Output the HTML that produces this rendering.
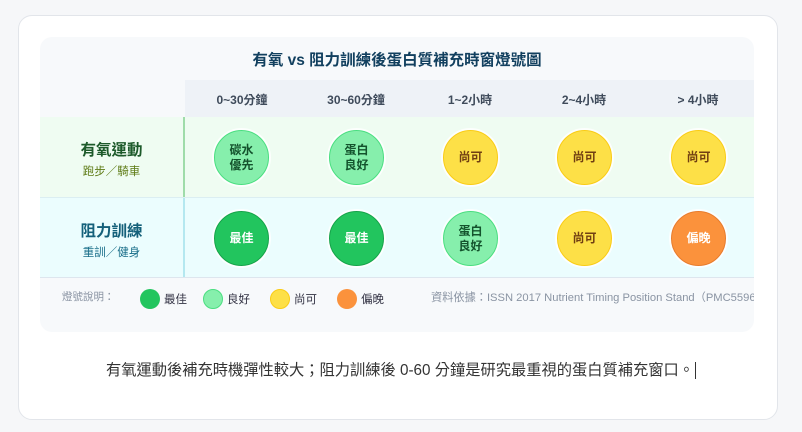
<!DOCTYPE html>
<html><head><meta charset="utf-8"><style>
*{margin:0;padding:0;box-sizing:border-box}
body{width:802px;height:432px;background:#f6f7f9;font-family:"Liberation Sans","Noto Sans CJK TC",sans-serif;position:relative;overflow:hidden}
.card{position:absolute;left:18px;top:15px;width:760px;height:405px;background:#fff;border:1px solid #e2e5ea;border-radius:14px}
.panel{position:absolute;left:40px;top:37px;width:714px;height:295px;background:#f7f9fb;border-radius:12px;overflow:hidden}
.title{position:absolute;left:0;right:0;top:11px;text-align:center;font-size:15.5px;font-weight:bold;color:#12405f}
.hdr{position:absolute;left:145px;top:43px;width:569px;height:37px;background:#eef2f7}
.hc{position:absolute;top:54px;width:114px;text-align:center;font-size:12px;font-weight:bold;color:#3f4b5b}
.row{position:absolute;left:0;width:714px}
.r1{top:80px;height:80px;background:#effcf2}
.r2{top:160px;height:81px;background:#ebfdfe;border-top:1px solid #dbeef2;border-bottom:1px solid #dde6ee}
.bar{position:absolute;left:143px;top:0;bottom:0;width:2px}
.lab{position:absolute;left:0;width:143px;text-align:center}
.lab b{display:block;font-size:15.5px}
.lab span{display:block;font-size:11.5px;margin-top:3px}
.c{position:absolute;width:55px;height:55px;border-radius:50%;display:flex;align-items:center;justify-content:center;text-align:center;font-size:12px;font-weight:bold;line-height:15px;box-shadow:0 0 0 2px rgba(255,255,255,.8)}
.best{background:#22c55e;border:1.5px solid #16a34a;color:#fff}
.good{background:#86efac;border:1.5px solid #4ade80;color:#14532d}
.ok{background:#fde047;border:1.5px solid #facc15;color:#713f12}
.late{background:#fb923c;border:1.5px solid #e87c2c;color:#fff}
.leg{position:absolute;top:252px;font-size:11.5px;color:#334;display:flex;align-items:center}
.dot{width:20px;height:20px;border-radius:50%;margin-right:4px}
.cap{position:absolute;left:0;width:802px;top:358px;text-align:center;font-size:15.25px;color:#333}
</style></head><body>
<div class="card"></div>
<div class="panel">
<div class="title">有氧 vs 阻力訓練後蛋白質補充時窗燈號圖</div>
<div class="hdr"></div>
<div class="hc" style="left:145px">0~30分鐘</div>
<div class="hc" style="left:259px">30~60分鐘</div>
<div class="hc" style="left:373px">1~2小時</div>
<div class="hc" style="left:487px">2~4小時</div>
<div class="hc" style="left:601px">&gt; 4小時</div>
<div class="row r1"><div class="bar" style="background:#9fdcaa"></div>
<div class="lab" style="top:21px"><b style="color:#1d5a2b">有氧運動</b><span style="color:#5d7a14">跑步／騎車</span></div></div>
<div class="row r2"><div class="bar" style="background:#b4e8f0"></div>
<div class="lab" style="top:21px"><b style="color:#14607a">阻力訓練</b><span style="color:#1a6f8a">重訓／健身</span></div></div>
<div class="c good" style="left:174px;top:93px">碳水<br>優先</div>
<div class="c good" style="left:289px;top:93px">蛋白<br>良好</div>
<div class="c ok" style="left:403px;top:93px">尚可</div>
<div class="c ok" style="left:517px;top:93px">尚可</div>
<div class="c ok" style="left:631px;top:93px">尚可</div>
<div class="c best" style="left:174px;top:174px">最佳</div>
<div class="c best" style="left:289px;top:174px">最佳</div>
<div class="c good" style="left:403px;top:174px">蛋白<br>良好</div>
<div class="c ok" style="left:517px;top:174px">尚可</div>
<div class="c late" style="left:631px;top:174px">偏晚</div>
<div class="leg" style="left:22px;color:#8a94a3;font-size:10.5px">燈號說明：</div>
<div class="leg" style="left:100px"><div class="dot" style="background:#22c55e"></div>最佳</div>
<div class="leg" style="left:163px"><div class="dot" style="background:#86efac;border:1px solid #4ade80"></div>良好</div>
<div class="leg" style="left:230px"><div class="dot" style="background:#fde047;border:1px solid #facc15"></div>尚可</div>
<div class="leg" style="left:297px"><div class="dot" style="background:#fb923c"></div>偏晚</div>
<div class="leg" style="left:391px;color:#8a94a3;font-size:11.2px;white-space:nowrap">資料依據：ISSN 2017 Nutrient Timing Position Stand（PMC5596471）</div>
</div>
<div class="cap">有氧運動後補充時機彈性較大；阻力訓練後 0-60 分鐘是研究最重視的蛋白質補充窗口。<span style="border-left:1px solid #333;margin-left:1px"></span></div>
</body></html>
